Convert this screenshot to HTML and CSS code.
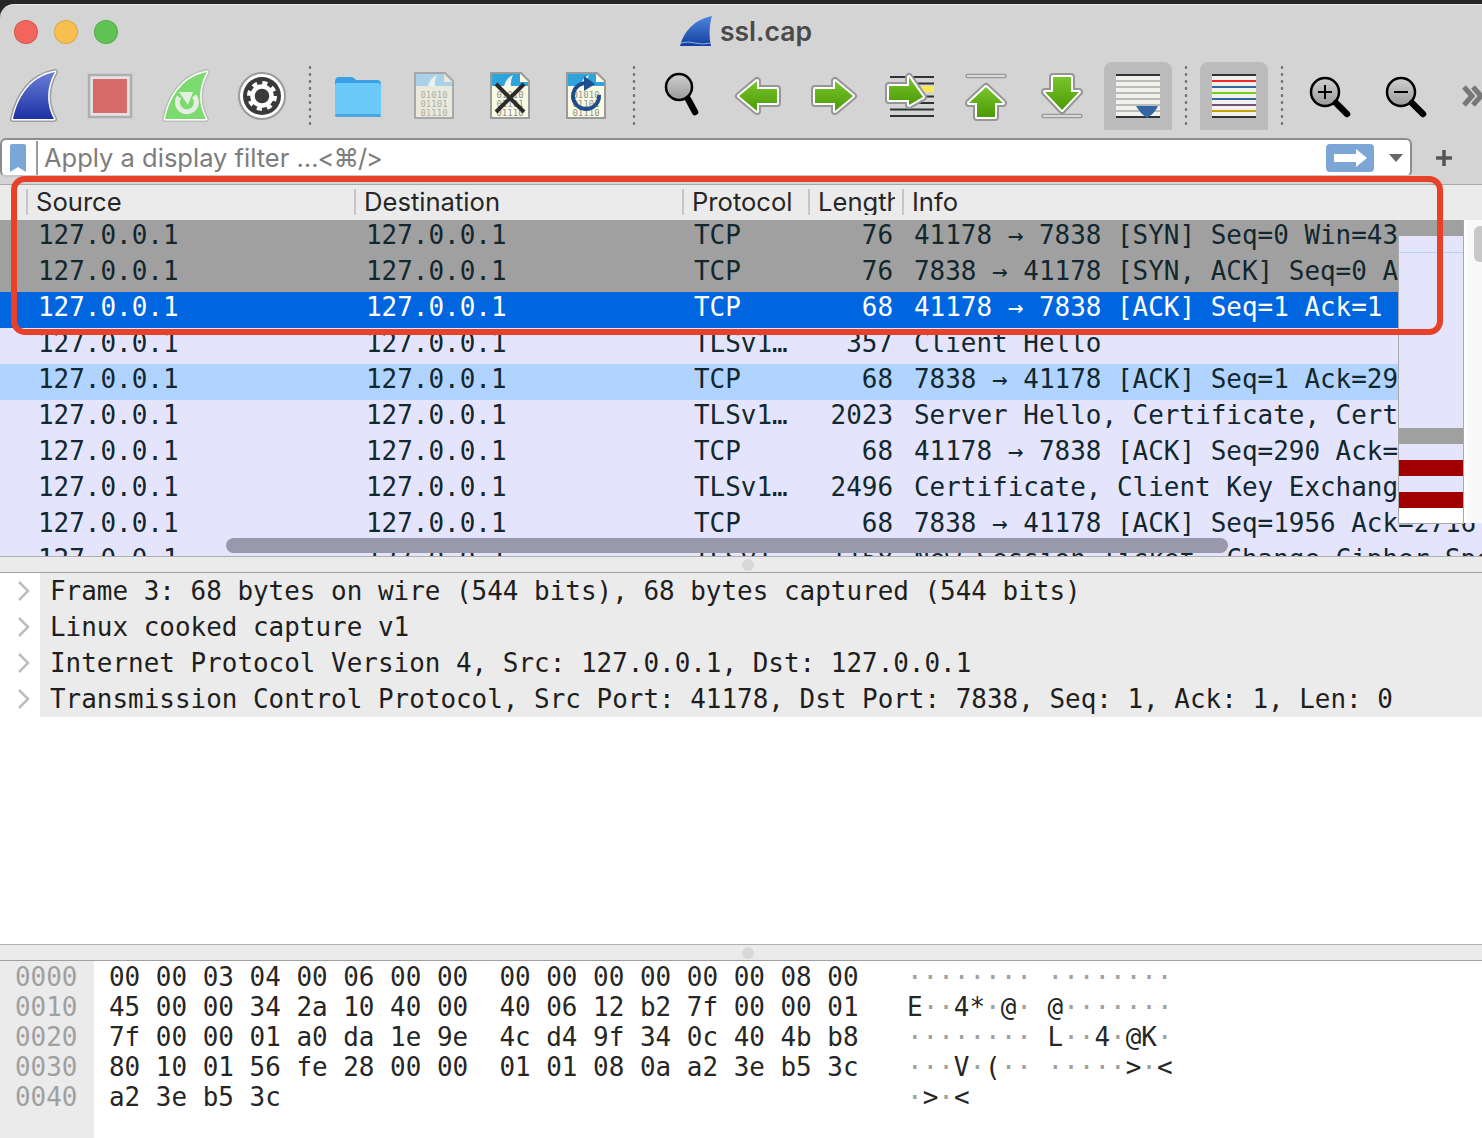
FILE: index.html
```html
<!DOCTYPE html>
<html lang="en">
<head>
<meta charset="utf-8">
<title>ssl.cap</title>
<link rel="stylesheet" href="styles.css">
</head>
<body>
<svg class="defs" aria-hidden="true">
  <defs>
    <linearGradient id="gFin" x1="0" y1="0" x2="0" y2="1"><stop offset="0" stop-color="#6a7ed8"/><stop offset="1" stop-color="#1c31a4"/></linearGradient>
    <linearGradient id="gTitle" x1="0" y1="0" x2="0" y2="1"><stop offset="0" stop-color="#4f86e0"/><stop offset="1" stop-color="#123f9c"/></linearGradient>
    <linearGradient id="gArrow" x1="0" y1="0" x2="0" y2="1"><stop offset="0" stop-color="#78c52c"/><stop offset="1" stop-color="#4c9a06"/></linearGradient>
    <linearGradient id="gLens" x1="0" y1="0" x2="0" y2="1"><stop offset="0" stop-color="#d0d0d0"/><stop offset="1" stop-color="#9a9a9a"/></linearGradient>
  </defs>
</svg>
<div class="win">
  <div class="topstrip"></div>
  <header class="titlebar">
    <span class="light red"></span><span class="light yellow"></span><span class="light green"></span>
    <div class="title">
      <svg class="title-fin" viewBox="0 0 32 30"><path d="M0 30 C4 14 16 3 32 0 C29 10 29 21 31 30 Z" fill="url(#gTitle)"/><path d="M1 27 Q8 25 15 27 T31 27" fill="none" stroke="#8fb0e8" stroke-width="1"/></svg>
      <span>ssl.cap</span>
    </div>
  </header>

  <nav class="toolbar">
    <button class="tb"><svg viewBox="0 0 68 68"><path class="o1" d="M13 57 C18 33 32 14 55 10 C46 25 46 43 54 57 Z"/><path class="o2" d="M13 57 C18 33 32 14 55 10 C46 25 46 43 54 57 Z"/><path d="M13 57 C18 33 32 14 55 10 C46 25 46 43 54 57 Z" fill="url(#gFin)"/></svg></button>
    <button class="tb"><svg viewBox="0 0 68 68"><rect x="13" y="13" width="42" height="42" fill="#e3e3e3" stroke="#aeaeae" stroke-width="2.5"/><rect x="17" y="17" width="34" height="34" fill="#d96a6a"/></svg></button>
    <button class="tb"><svg viewBox="0 0 68 68"><path class="o1 pale" d="M13 57 C18 33 32 14 55 10 C46 25 46 43 54 57 Z"/><path class="o2" d="M13 57 C18 33 32 14 55 10 C46 25 46 43 54 57 Z"/><path d="M13 57 C18 33 32 14 55 10 C46 25 46 43 54 57 Z" fill="#7cdb6e"/><path d="M27 35 A9.5 9.5 0 1 0 42 34" fill="none" stroke="#e4efe2" stroke-width="5"/><path d="M27 30 L41 30 L36 43 Z" fill="#e4efe2"/></svg></button>
    <button class="tb"><svg viewBox="0 0 68 68"><circle cx="34" cy="34" r="23" fill="#fff" stroke="#9a9a9a" stroke-width="2"/><circle cx="34" cy="34" r="19" fill="#3a3a3a"/><circle cx="34" cy="34" r="9.5" fill="none" stroke="#fff" stroke-width="4.5"/><circle cx="34" cy="34" r="13" fill="none" stroke="#fff" stroke-width="4" stroke-dasharray="5 5.2"/></svg></button>
    <span class="sep"></span>
    <button class="tb"><svg viewBox="0 0 68 68"><path d="M11 20 Q11 15 15 15 H27 Q30 15 32 18 H53 Q57 18 57 22 V30 H11 Z" fill="#3ba1e6"/><path d="M11 24 Q11 21 14 21 H54 Q57 21 57 24 V52 Q57 55 54 55 H14 Q11 55 11 52 Z" fill="#6ccafb"/><rect x="11" y="52" width="46" height="3" rx="1.5" fill="#4aa8e0"/></svg></button>
    <button class="tb"><svg viewBox="0 0 68 68"><path d="M15 11 H45 L53 19 V56 H15 Z" fill="#e9e9dc" stroke="#a8a8a8" stroke-width="2"/><path d="M16 12 H44 V20 H52 V24 H16 Z" fill="#a9d2e8"/><path d="M28 24 Q30 16 37 13 Q34 19 35 24 Z" fill="#e9f1f2"/><text class="bits pale-bits" x="34" y="36">01010</text><text class="bits pale-bits" x="34" y="45">01101</text><text class="bits pale-bits" x="34" y="54">01110</text></svg></button>
    <button class="tb"><svg viewBox="0 0 68 68"><path d="M15 11 H45 L53 19 V56 H15 Z" fill="#fbfbe4" stroke="#9a9a9a" stroke-width="2"/><path d="M16 12 H44 V20 H52 V24 H16 Z" fill="#2ea3dc"/><path d="M28 24 Q30 16 37 13 Q34 19 35 24 Z" fill="#eef6f8"/><text class="bits" x="34" y="36">01010</text><text class="bits" x="34" y="45">01101</text><text class="bits" x="34" y="54">01110</text><path d="M20 22 L48 50 M48 22 L20 50" stroke="#2b2b2b" stroke-width="4"/></svg></button>
    <button class="tb"><svg viewBox="0 0 68 68"><path d="M15 11 H45 L53 19 V56 H15 Z" fill="#fbfbe4" stroke="#9a9a9a" stroke-width="2"/><path d="M16 12 H44 V20 H52 V24 H16 Z" fill="#2ea3dc"/><path d="M28 24 Q30 16 37 13 Q34 19 35 24 Z" fill="#eef6f8"/><text class="bits" x="34" y="36">01010</text><text class="bits" x="34" y="45">01101</text><text class="bits" x="34" y="54">01110</text><path d="M39 22 A13 13 0 1 0 47 33" fill="none" stroke="#1f4e8c" stroke-width="4"/><path d="M32 14 L43 22 L32 29 Z" fill="#1f4e8c"/></svg></button>
    <span class="sep"></span>
    <button class="tb"><svg viewBox="0 0 68 68"><circle cx="31" cy="25" r="13" fill="url(#gLens)" stroke="#000" stroke-width="2.5"/><path d="M40 37 L47 50" stroke="#000" stroke-width="6.5" stroke-linecap="round"/></svg></button>
    <button class="tb"><svg viewBox="0 0 68 68"><path class="a1" d="M15 34 L33 19 V27 H53 V41 H33 V49 Z"/><path class="a2" d="M15 34 L33 19 V27 H53 V41 H33 V49 Z"/><path d="M15 34 L33 19 V27 H53 V41 H33 V49 Z" fill="url(#gArrow)"/></svg></button>
    <button class="tb"><svg viewBox="0 0 68 68"><path class="a1" d="M53 34 L35 19 V27 H15 V41 H35 V49 Z"/><path class="a2" d="M53 34 L35 19 V27 H15 V41 H35 V49 Z"/><path d="M53 34 L35 19 V27 H15 V41 H35 V49 Z" fill="url(#gArrow)"/></svg></button>
    <button class="tb"><svg viewBox="0 0 68 68"><path d="M14 15 H58 M14 21.5 H58 M14 28 H58 M14 34.5 H58 M14 41 H58 M14 47.5 H58 M14 54 H58" stroke="#2e3436" stroke-width="2"/><rect x="46" y="24" width="12" height="6" fill="#fce94f"/><path class="a1" d="M47 35 L33 15 V24 H13 V38 H33 V43 Z"/><path class="a2" d="M47 35 L33 15 V24 H13 V38 H33 V43 Z"/><path d="M47 35 L33 15 V24 H13 V38 H33 V43 Z" fill="url(#gArrow)"/></svg></button>
    <button class="tb"><svg viewBox="0 0 68 68"><rect x="14" y="12.5" width="40" height="3" rx="1.5" fill="#f0f0f0" stroke="#999" stroke-width="1.5"/><path class="a1" d="M34 25 L51 41 H43 V55 H25 V41 H17 Z"/><path class="a2" d="M34 25 L51 41 H43 V55 H25 V41 H17 Z"/><path d="M34 25 L51 41 H43 V55 H25 V41 H17 Z" fill="url(#gArrow)"/></svg></button>
    <button class="tb"><svg viewBox="0 0 68 68"><rect x="14" y="52.5" width="40" height="3" rx="1.5" fill="#f0f0f0" stroke="#999" stroke-width="1.5"/><path class="a1" d="M34 48 L51 30 H43 V15 H25 V30 H17 Z"/><path class="a2" d="M34 48 L51 30 H43 V15 H25 V30 H17 Z"/><path d="M34 48 L51 30 H43 V15 H25 V30 H17 Z" fill="url(#gArrow)"/></svg></button>
    <button class="tb active"><svg viewBox="0 0 68 68"><rect x="12" y="12" width="44" height="44" fill="#f1f1ed"/><path d="M12 19 H56 M12 25 H56 M12 31 H56 M12 37 H56 M12 43 H56 M12 49 H56" stroke="#babdb6" stroke-width="2"/><path d="M12 13 H56 M12 55 H56" stroke="#2e3436" stroke-width="2"/><path d="M32 44 H54 Q51 51 43 56 Q36 51 32 44 Z" fill="#3465a4"/></svg></button>
    <span class="sep"></span>
    <button class="tb active"><svg viewBox="0 0 68 68"><rect x="12" y="12" width="44" height="44" fill="#f1f1ed"/><path d="M12 13 H56 M12 55 H56" stroke="#2e3436" stroke-width="2"/><path d="M12 19 H56" stroke="#ef2929" stroke-width="2"/><path d="M12 25 H56" stroke="#3465a4" stroke-width="2"/><path d="M12 31 H56" stroke="#73d216" stroke-width="2"/><path d="M12 37 H56" stroke="#3465a4" stroke-width="2"/><path d="M12 43 H56" stroke="#75507b" stroke-width="2"/><path d="M12 49 H56" stroke="#c4a000" stroke-width="2"/></svg></button>
    <span class="sep"></span>
    <button class="tb"><svg viewBox="0 0 68 68"><circle cx="29" cy="30" r="14" fill="url(#gLens)" stroke="#000" stroke-width="2.5"/><path d="M40 41 L51 52" stroke="#000" stroke-width="6.5" stroke-linecap="round"/><path d="M22 30 H36 M29 23 V37" stroke="#000" stroke-width="2"/></svg></button>
    <button class="tb"><svg viewBox="0 0 68 68"><circle cx="29" cy="30" r="14" fill="url(#gLens)" stroke="#000" stroke-width="2.5"/><path d="M40 41 L51 52" stroke="#000" stroke-width="6.5" stroke-linecap="round"/><path d="M22 30 H36" stroke="#000" stroke-width="2"/></svg></button>
    <svg class="more" viewBox="0 0 34 68"><path d="M16 25 L24 34 L16 43 M25 25 L33 34 L25 43" fill="none" stroke="#777" stroke-width="5"/></svg>
  </nav>

  <div class="filterbar">
    <div class="filter">
      <svg class="bookmark" viewBox="0 0 16 28"><path d="M0 2 Q0 0 2 0 H14 Q16 0 16 2 V28 L8 23 L0 28 Z" fill="#7ba7d8"/></svg>
      <span class="filter-div"></span>
      <span class="placeholder">Apply a display filter <span class="shortcut">…&lt;⌘/&gt;</span></span>
      <span class="go"><svg viewBox="0 0 48 28"><path d="M8 10 H30 V5 L41 14 L30 23 V18 H8 Z" fill="#fff"/></svg></span>
      <svg class="drop" viewBox="0 0 14 8"><path d="M0 0 H14 L7 8 Z" fill="#666"/></svg>
    </div>
    <svg class="plus" viewBox="0 0 16 16"><path d="M8 0 V16 M0 8 H16" stroke="#555" stroke-width="3.5"/></svg>
  </div>

  <section class="packets">
    <div class="hdr">
      <span class="hc">Source</span><span class="hc">Destination</span><span class="hc">Protocol</span><span class="hc hc-clip"><span class="hc-inner">Length</span></span><span class="hc">Info</span>
    </div>
    <div class="row gray"><span>127.0.0.1</span><span>127.0.0.1</span><span>TCP</span><span class="len">76</span><span class="info">41178 → 7838 [SYN] Seq=0 Win=43690 Len=0</span></div>
    <div class="row gray"><span>127.0.0.1</span><span>127.0.0.1</span><span>TCP</span><span class="len">76</span><span class="info">7838 → 41178 [SYN, ACK] Seq=0 Ack=1 Win=43690</span></div>
    <div class="row sel"><span>127.0.0.1</span><span>127.0.0.1</span><span>TCP</span><span class="len">68</span><span class="info">41178 → 7838 [ACK] Seq=1 Ack=1</span></div>
    <div class="row"><span>127.0.0.1</span><span>127.0.0.1</span><span>TLSv1…</span><span class="len">357</span><span class="info">Client Hello</span></div>
    <div class="row blue"><span>127.0.0.1</span><span>127.0.0.1</span><span>TCP</span><span class="len">68</span><span class="info">7838 → 41178 [ACK] Seq=1 Ack=290 Win=44800</span></div>
    <div class="row"><span>127.0.0.1</span><span>127.0.0.1</span><span>TLSv1…</span><span class="len">2023</span><span class="info">Server Hello, Certificate, Certificate Request</span></div>
    <div class="row"><span>127.0.0.1</span><span>127.0.0.1</span><span>TCP</span><span class="len">68</span><span class="info">41178 → 7838 [ACK] Seq=290 Ack=1956 Win=48128</span></div>
    <div class="row"><span>127.0.0.1</span><span>127.0.0.1</span><span>TLSv1…</span><span class="len">2496</span><span class="info">Certificate, Client Key Exchange, Certificate</span></div>
    <div class="row"><span>127.0.0.1</span><span>127.0.0.1</span><span>TCP</span><span class="len">68</span><span class="info">7838 → 41178 [ACK] Seq=1956 Ack=2716</span></div>
    <div class="row"><span>127.0.0.1</span><span>127.0.0.1</span><span>TLSv1…</span><span class="len">1158</span><span class="info">New Session Ticket, Change Cipher Spec</span></div>
    <div class="minimap">
      <i class="m16 mg"></i><i class="m16"></i><i class="m1 mb"></i><i class="m175"></i><i class="m16 mg"></i><i class="m16"></i><i class="m16 mr"></i><i class="m16"></i><i class="m16 mr"></i><i class="m15 mw"></i>
    </div>
    <div class="vtrack"><div class="vthumb"></div></div>
    <div class="hthumb"></div>
  </section>

  <div class="splitter"><span class="grip"></span></div>

  <section class="details">
    <div class="drow"><svg class="chev" viewBox="0 0 40 36"><path d="M19 9 L28 18 L19 27"/></svg><span class="dtext">Frame 3: 68 bytes on wire (544 bits), 68 bytes captured (544 bits)</span></div>
    <div class="drow"><svg class="chev" viewBox="0 0 40 36"><path d="M19 9 L28 18 L19 27"/></svg><span class="dtext">Linux cooked capture v1</span></div>
    <div class="drow"><svg class="chev" viewBox="0 0 40 36"><path d="M19 9 L28 18 L19 27"/></svg><span class="dtext">Internet Protocol Version 4, Src: 127.0.0.1, Dst: 127.0.0.1</span></div>
    <div class="drow"><svg class="chev" viewBox="0 0 40 36"><path d="M19 9 L28 18 L19 27"/></svg><span class="dtext">Transmission Control Protocol, Src Port: 41178, Dst Port: 7838, Seq: 1, Ack: 1, Len: 0</span></div>
  </section>

  <div class="splitter"><span class="grip"></span></div>

  <section class="hex">
    <div class="offsets">0000
0010
0020
0030
0040</div>
    <div class="bytes">00 00 03 04 00 06 00 00  00 00 00 00 00 00 08 00
45 00 00 34 2a 10 40 00  40 06 12 b2 7f 00 00 01
7f 00 00 01 a0 da 1e 9e  4c d4 9f 34 0c 40 4b b8
80 10 01 56 fe 28 00 00  01 01 08 0a a2 3e b5 3c
a2 3e b5 3c</div>
    <div class="ascii"><b>········</b> <b>········</b>
E<b>··</b>4*<b>·</b>@<b>·</b> @<b>·······</b>
<b>········</b> L<b>··</b>4<b>·</b>@K<b>·</b>
<b>···</b>V<b>·</b>(<b>··</b> <b>·····</b>&gt;<b>·</b>&lt;
<b>·</b>&gt;<b>·</b>&lt;</div>
  </section>

  <div class="callout"></div>
</div>
</body>
</html>
```

FILE: styles.css
```css
* { box-sizing: border-box; }
html, body { margin: 0; padding: 0; }
body { background: #262626; overflow: hidden; }
.defs { display: block; width: 0; height: 0; }

.win {
  position: relative;
  width: 1482px;
  height: 1138px;
  overflow: hidden;
  display: flex;
  flex-direction: column;
  background: #262626;
  font-family: "Inter", "Liberation Sans", sans-serif;
}
.topstrip { height: 4px; flex: none; }

.titlebar {
  flex: none;
  height: 58px;
  display: flex;
  align-items: center;
  gap: 16px;
  padding: 0 0 3px 14px;
  background: #d4d4d4;
  border-top: 1px solid #e8e8e8;
  border-top-left-radius: 14px;
}
.light { width: 24px; height: 24px; border-radius: 50%; border: 1px solid rgba(0,0,0,.12); }
.light.red { background: #f1655c; }
.light.yellow { background: #f7bf4f; }
.light.green { background: #5fc453; }
.title {
  margin: -2px 0 0 546px;
  display: flex;
  align-items: center;
  gap: 8px;
  font-size: 26.5px;
  font-weight: 600;
  color: #4a4a4a;
}
.title-fin { width: 32px; height: 30px; }

.toolbar {
  flex: none;
  height: 76px;
  display: flex;
  align-items: flex-start;
  gap: 8px;
  background: #d4d4d4;
  overflow: hidden;
}
.tb {
  flex: none;
  width: 68px;
  height: 68px;
  padding: 0;
  border: 0;
  background: none;
  border-radius: 8px 8px 0 0;
}
.tb svg { display: block; width: 68px; height: 68px; }
.tb.active { background: #bcbcbc; }
.sep {
  flex: none;
  width: 12px;
  height: 64px;
  margin-top: 2px;
  background: radial-gradient(circle at center, #777 1.2px, transparent 1.6px) center top / 4px 7px repeat-y;
}
.more { flex: none; width: 34px; height: 68px; }
.o1 { fill: none; stroke: #9c9c9c; stroke-width: 6; stroke-linejoin: round; }
.o1.pale { stroke: #bdbdbd; }
.o2 { fill: none; stroke: #fff; stroke-width: 3; stroke-linejoin: round; }
.a1 { fill: none; stroke: #969696; stroke-width: 8; stroke-linejoin: round; }
.a2 { fill: none; stroke: #fff; stroke-width: 4; stroke-linejoin: round; }
.bits {
  font-family: "DejaVu Sans Mono", monospace;
  font-size: 9px;
  fill: #8f8f8f;
  text-anchor: middle;
}
.pale-bits { fill: #b0b0a8; }

.filterbar {
  flex: none;
  height: 47px;
  display: flex;
  align-items: flex-start;
  background: #d4d4d4;
  border-bottom: 1px solid #a8a8a8;
}
.filter {
  width: 1412px;
  height: 39px;
  display: flex;
  align-items: center;
  background: #fff;
  border: 2px solid #8c8c8c;
  border-bottom-color: #c8c8c8;
  border-radius: 6px;
  padding-left: 8px;
}
.bookmark { flex: none; width: 16px; height: 28px; }
.filter-div { flex: none; width: 2px; height: 34px; margin-left: 10px; background: #9c9c9c; }
.placeholder {
  flex: 1;
  padding-left: 6px;
  font-size: 25.5px;
  color: #7d7d7d;
  white-space: nowrap;
}
.shortcut { letter-spacing: -1px; }
.go { flex: none; width: 48px; height: 28px; background: #7ba6d6; border-radius: 4px; }
.go svg { display: block; width: 48px; height: 28px; }
.drop { flex: none; width: 14px; height: 8px; margin: 0 7px 0 15px; }
.plus { flex: none; width: 16px; height: 16px; margin: 12px 0 0 24px; }

.packets {
  flex: none;
  position: relative;
  height: 372px;
  overflow: hidden;
  background: #e4e4fc;
  border-bottom: 1px solid #b0b0b0;
}
.hdr, .row {
  display: grid;
  grid-template-columns: 328px 328px 126px 94px 1fr;
  padding-left: 27px;
}
.hdr {
  height: 35px;
  padding-left: 26px;
  padding-bottom: 2px;
  background: #ebebeb;
  font-size: 25.6px;
  color: #262626;
  align-items: center;
}
.hc {
  height: 26px;
  line-height: 26px;
  padding-left: 8px;
  border-left: 2px solid #c6c6c6;
  white-space: nowrap;
}
.hc-clip { overflow: hidden; }
.hc-inner { display: block; width: 77px; overflow: hidden; }
.row {
  height: 36px;
  line-height: 30px;
  padding-bottom: 6px;
  font-family: "DejaVu Sans Mono", monospace;
  font-size: 25.95px;
  color: #12272e;
  white-space: nowrap;
}
.row > span { padding-left: 11px; }
.row > .len { padding: 0 10px 0 0; text-align: right; }
.row.gray { background: #a0a0a0; }
.row.sel { background: #0066e0; color: #fff; }
.row.blue { background: #b0d4ff; }

.minimap {
  position: absolute;
  left: 1398px;
  top: 35px;
  width: 66px;
  height: 304px;
  display: flex;
  flex-direction: column;
  background: #e4e4fc;
  border: 1px solid #a8a8a8;
  border-top: 0;
}
.minimap i { display: block; flex: none; }
.m16 { height: 16px; }
.m15 { height: 15px; }
.m1 { height: 1px; }
.m175 { height: 175px; }
.mg { background: #a0a0a0; }
.mb { background: #b0d4ff; }
.mr { background: #a00000; }
.mw { background: #fff; }
.vtrack {
  position: absolute;
  left: 1464px;
  top: 35px;
  width: 18px;
  height: 303px;
  background: #f9f9f9;
  border-left: 3px solid #fff;
  padding: 6px 0 0 7px;
}
.vthumb { width: 8px; height: 36px; background: #c8c8c8; border-radius: 6px 0 0 6px; }
.hthumb {
  position: absolute;
  left: 226px;
  top: 353px;
  width: 1002px;
  height: 15px;
  background: #9a98ab;
  border-radius: 8px;
}

.splitter {
  flex: none;
  height: 16px;
  background: #ebebeb;
  border-bottom: 1px solid #a0a0a0;
  display: flex;
  justify-content: center;
  align-items: center;
}
.grip { width: 12px; height: 12px; border-radius: 50%; background: #d8d8d8; margin-left: 14px; }

.details {
  flex: none;
  height: 372px;
  background: #fff;
  border-bottom: 1px solid #b0b0b0;
}
.drow { display: flex; height: 36px; }
.chev { flex: none; width: 40px; height: 36px; fill: none; stroke: #bdbdbd; stroke-width: 2.5; }
.dtext {
  flex: 1;
  padding-left: 10px;
  background: #ebebeb;
  line-height: 36px;
  font-family: "DejaVu Sans Mono", monospace;
  font-size: 25.95px;
  color: #1e1e1e;
  white-space: nowrap;
}

.hex {
  flex: 1;
  display: flex;
  background: #fff;
  font-family: "DejaVu Sans Mono", monospace;
  font-size: 25.95px;
  line-height: 30px;
  color: #262626;
  white-space: pre;
}
.offsets { flex: none; width: 94px; padding: 1px 0 0 15px; background: #ebebeb; color: #a0a0a0; }
.bytes { flex: none; width: 798px; padding: 1px 0 0 15px; }
.ascii { flex: none; padding: 1px 0 0 15px; }
.ascii b { font-weight: 400; color: #a0a0a0; }

.callout {
  position: absolute;
  left: 11px;
  top: 176px;
  width: 1432px;
  height: 159px;
  border: 6px solid #e8412a;
  border-radius: 14px;
  pointer-events: none;
}
```
